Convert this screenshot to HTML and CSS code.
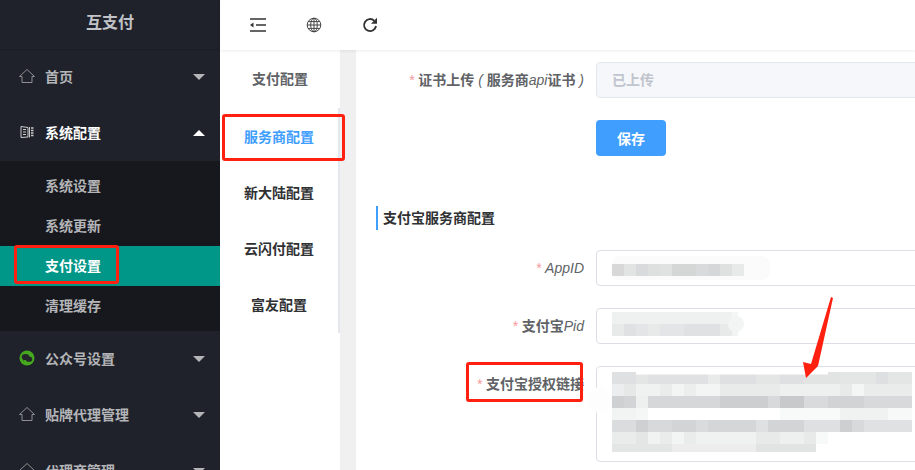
FILE: index.html
```html
<!DOCTYPE html>
<html lang="zh-CN">
<head>
    <meta charset="UTF-8">
    <meta name="viewport" content="width=device-width, initial-scale=1.0">
    <title>互支付</title>
    <link rel="stylesheet" href="styles.css">
</head>
<body>
    <aside class="sidebar">
        <div class="logo">互支付</div>
        <ul class="menu">
            <li class="menu-item">
                <svg class="menu-icon" viewBox="0 0 16 16"><path d="M.5 8.500 8 1.500l7.500 7H13v6H3v-6z" fill="none" stroke="currentColor"/></svg>
                <span>首页</span><b class="caret"></b>
            </li>
            <li class="menu-item open">
                <svg class="menu-icon" viewBox="0 0 16 16"><path d="M2 2.500l7 1v9.500l-7 .5zM4 5.500h3M4 8h3M4 10.500h3M10.500 3v10.500" fill="none" stroke="currentColor"/><path d="M12 4h2.500M12 6.500h2.500M12 9h2.500M12 11.500h2.500" fill="none" stroke="currentColor" stroke-width="1.300"/></svg>
                <span>系统配置</span><b class="caret up"></b>
            </li>
            <li>
                <ul class="submenu">
                    <li>系统设置</li>
                    <li>系统更新</li>
                    <li class="active"><i class="mark mark-pay"></i>支付设置</li>
                    <li>清理缓存</li>
                </ul>
            </li>
            <li class="menu-item">
                <svg class="menu-icon" viewBox="0 0 16 16"><circle cx="8" cy="8" r="7.500" fill="#46a81e"/><ellipse cx="6.500" cy="7" rx="3.800" ry="3.100" fill="#23262a"/><ellipse cx="10" cy="9.200" rx="3.200" ry="2.600" fill="#23262a"/><path d="M4 10.800l.3-2 1.500 1z" fill="#23262a"/></svg>
                <span>公众号设置</span><b class="caret"></b>
            </li>
            <li class="menu-item">
                <svg class="menu-icon" viewBox="0 0 16 16"><path d="M.5 8.500 8 1.500l7.500 7H13v6H3v-6z" fill="none" stroke="currentColor"/></svg>
                <span>贴牌代理管理</span><b class="caret"></b>
            </li>
            <li class="menu-item">
                <svg class="menu-icon" viewBox="0 0 16 16"><path d="M.5 8.500 8 1.500l7.500 7H13v6H3v-6z" fill="none" stroke="currentColor"/></svg>
                <span>代理商管理</span><b class="caret"></b>
            </li>
        </ul>
    </aside>

    <div class="main">
        <header class="topbar">
            <svg class="tool" viewBox="0 0 16 16"><path d="M0 2h16M6 8h10M0 14h16" fill="none" stroke="#333" stroke-width="1.500"/><path d="M0 8l3.500-2.500v5z" fill="#333"/></svg>
            <svg class="tool" viewBox="0 0 16 16"><g fill="none" stroke="#444" stroke-width="1"><circle cx="8" cy="8" r="6.800"/><ellipse cx="8" cy="8" rx="3.300" ry="6.800"/><path d="M8 1.200v13.600M1.200 8h13.600M2.200 4.600h11.600M2.200 11.400h11.600"/></g></svg>
            <svg class="tool" viewBox="0 0 16 16"><path d="M14 9A6 6 0 1 1 12.200 3.700" fill="none" stroke="#333" stroke-width="1.900"/><path d="M15 .8v6H9z" fill="#333"/></svg>
        </header>

        <div class="body">
            <nav class="tabs">
                <div class="tab tab-first">支付配置</div>
                <div class="tab-list">
                    <div class="tab current"><i class="mark mark-tab"></i>服务商配置</div>
                    <div class="tab">新大陆配置</div>
                    <div class="tab">云闪付配置</div>
                    <div class="tab">富友配置</div>
                </div>
            </nav>

            <main class="content">
                <div class="row">
                    <label class="label"><em>*</em>证书上传 <i>(</i> 服务商<i>api</i>证书 <i>)</i></label>
                    <div class="field disabled">已上传</div>
                </div>
                <div class="row row-button">
                    <button class="save">保存</button>
                </div>

                <h3 class="section">支付宝服务商配置</h3>

                <div class="row">
                    <label class="label"><em>*</em><i>AppID</i></label>
                    <div class="field">
                        <svg class="blur" viewBox="596 250 200 36" width="200" height="36">
                            <rect x="612" y="256" width="158" height="24" rx="8" fill="#fbfbfb"/>
                            <g stroke-width="12">
                                <path stroke="#d8d8d9" d="M612 270h12"/><path stroke="#e2e3e3" d="M624 270h12"/><path stroke="#d9dadb" d="M636 270h12"/><path stroke="#dedfdf" d="M648 270h12"/><path stroke="#e0e1e1" d="M660 270h12"/><path stroke="#d5d6d6" d="M672 270h24"/><path stroke="#d9dadb" d="M696 270h12"/><path stroke="#d6d7d8" d="M708 270h12"/><path stroke="#dfe0e0" d="M720 270h12"/><path stroke="#e8e9e9" d="M732 270h12"/>
                            </g>
                        </svg>
                    </div>
                </div>
                <div class="row">
                    <label class="label"><em>*</em>支付宝<i>Pid</i></label>
                    <div class="field">
                        <svg class="blur" viewBox="596 308 200 36" width="200" height="36">
                            <g stroke-width="12">
                                <path stroke="#eff0f0" d="M612 318h120"/><path stroke="#f4f5f5" d="M732 318h6"/>
                                <path stroke="#e8e9e9" d="M612 330h12"/><path stroke="#e0e1e3" d="M624 330h12"/><path stroke="#e4e5e6" d="M636 330h12"/><path stroke="#e8e9e9" d="M648 330h12"/><path stroke="#e4e5e6" d="M660 330h24"/><path stroke="#e0e1e3" d="M684 330h36"/><path stroke="#e8e9e9" d="M720 330h12"/><path stroke="#f2f3f3" d="M732 330h6"/>
                            </g>
                            <circle cx="736" cy="324" r="8" fill="#f3f4f4"/>
                        </svg>
                    </div>
                </div>
                <div class="row">
                    <label class="label"><i class="mark mark-label"></i><em>*</em>支付宝授权链接</label>
                    <div class="field textarea">
                        <svg class="blur blur-area" viewBox="586 366 330 96" width="330" height="96">
                            <rect x="588" y="387" width="24" height="26" rx="12" fill="#fdfdfd"/>
                            <g stroke-width="12">
                                <path stroke="#dfe0e1" d="M612 378h24"/><path stroke="#e4e5e5" d="M636 378h12"/><path stroke="#e0e1e2" d="M648 378h60"/><path stroke="#e9eaea" d="M708 378h12"/><path stroke="#dfe0e1" d="M720 378h36"/><path stroke="#e4e5e5" d="M756 378h24"/><path stroke="#dfe0e1" d="M780 378h24"/><path stroke="#e2e3e3" d="M804 378h36"/><path stroke="#e4e5e5" d="M840 378h36"/><path stroke="#dedfe0" d="M876 378h12"/><path stroke="#e4e5e5" d="M888 378h24"/>
                                <path stroke="#ecedee" d="M612 390h12"/><path stroke="#e6e7e7" d="M624 390h12"/><path stroke="#f0f1f1" d="M636 390h24"/><path stroke="#eaebeb" d="M660 390h12"/><path stroke="#f3f4f4" d="M672 390h12"/><path stroke="#eceded" d="M684 390h12"/><path stroke="#f3f4f4" d="M696 390h24"/><path stroke="#e9eaea" d="M720 390h60"/><path stroke="#eeefef" d="M780 390h60"/><path stroke="#e8e9e9" d="M840 390h12"/><path stroke="#f4f5f5" d="M852 390h12"/><path stroke="#eaebeb" d="M864 390h48"/>
                                <path stroke="#cfd0d1" d="M612 402h12"/><path stroke="#d3d4d5" d="M624 402h12"/><path stroke="#eeefef" d="M636 402h12"/><path stroke="#d6d7d8" d="M648 402h72"/><path stroke="#cdced0" d="M720 402h48"/><path stroke="#d8d9da" d="M768 402h12"/><path stroke="#c8c9cb" d="M780 402h24"/><path stroke="#d9dadb" d="M804 402h24"/><path stroke="#d2d3d4" d="M828 402h36"/><path stroke="#d8d9da" d="M864 402h48"/>
                                <path stroke="#f2f3f3" d="M612 414h24"/><path stroke="#f5f6f6" d="M636 414h12"/><path stroke="#ffffff" d="M648 414h132"/><path stroke="#f8f9f9" d="M780 414h60"/><path stroke="#f0f1f1" d="M840 414h48"/><path stroke="#f7f8f8" d="M888 414h24"/>
                                <path stroke="#dbdcdd" d="M612 426h24"/><path stroke="#cfd0d2" d="M636 426h12"/><path stroke="#d8d9da" d="M648 426h24"/><path stroke="#d3d4d5" d="M672 426h24"/><path stroke="#dadbdc" d="M696 426h12"/><path stroke="#d5d6d7" d="M708 426h48"/><path stroke="#dfe0e1" d="M756 426h12"/><path stroke="#d3d4d5" d="M768 426h36"/><path stroke="#dfe0e1" d="M804 426h36"/><path stroke="#cdcfd1" d="M840 426h12"/><path stroke="#d8d9da" d="M852 426h12"/><path stroke="#e0e1e2" d="M864 426h48"/>
                                <path stroke="#eaebeb" d="M612 438h24"/><path stroke="#e4e5e5" d="M636 438h12"/><path stroke="#f1f2f2" d="M648 438h12"/><path stroke="#eaebeb" d="M660 438h12"/><path stroke="#f3f4f4" d="M672 438h12"/><path stroke="#eaebeb" d="M684 438h12"/><path stroke="#f0f1f1" d="M696 438h60"/><path stroke="#e8e9e9" d="M756 438h24"/><path stroke="#eeefef" d="M780 438h24"/><path stroke="#e8e9e9" d="M804 438h12"/><path stroke="#f8f9f9" d="M816 438h12"/>
                            </g>
                            <g stroke-width="8">
                                <path stroke="#e4e5e5" d="M612 448h60"/><path stroke="#ededed" d="M672 448h84"/><path stroke="#e2e3e3" d="M756 448h60"/>
                            </g>
                            <path d="M636 373h192" stroke="#fff" stroke-width="3"/>
                        </svg>
                    </div>
                </div>
            </main>
        </div>
    </div>

    <svg class="arrow" viewBox="0 0 915 470" width="915" height="470"><path d="M831 297 833 298 818 366 806 378 803 362 811 364z" fill="#ff2010"/></svg>
</body>
</html>
```

FILE: styles.css
```css
* {
    box-sizing: border-box;
    margin: 0;
    padding: 0;
}

html, body {
    height: 100%;
    overflow: hidden;
}

body {
    display: flex;
    position: relative;
    font-family: "Liberation Sans", "Noto Sans CJK SC", sans-serif;
    font-size: 14px;
    color: #606266;
    background-color: #fff;
}

ul {
    list-style: none;
}

/* 左侧菜单 */
.sidebar {
    width: 220px;
    flex-shrink: 0;
    background-color: #1f222a;
    color: #b4b5b8;
    font-weight: 700;
}

.logo {
    height: 49px;
    line-height: 46px;
    text-align: center;
    font-size: 16px;
    color: #c2c3c6;
    box-shadow: 0 1px 1px rgba(0, 0, 0, 0.1);
}

.menu-item {
    display: flex;
    align-items: center;
    height: 56px;
    padding: 0 15px 2px 19px;
}

.menu-icon {
    width: 16px;
    height: 16px;
    margin-right: 10px;
    color: #8e8f92;
}

.menu-item.open {
    color: #fff;
}

.menu-item.open .menu-icon {
    color: #c9cacc;
}

.caret {
    margin-left: auto;
    margin-top: 1px;
    border-left: 6px solid transparent;
    border-right: 6px solid transparent;
    border-top: 6px solid #b4b5b8;
}

.caret.up {
    border-top: 0;
    border-bottom: 6px solid #fff;
}

.submenu {
    background-color: #17181d;
    padding: 5px 0;
}

.submenu li {
    position: relative;
    height: 40px;
    line-height: 40px;
    padding-left: 45px;
}

.submenu li.active {
    background-color: #009688;
    color: #fff;
}

/* 红色标注框 */
.mark {
    position: absolute;
    border: 3px solid #ff2010;
    border-radius: 3px;
}

.mark-pay {
    left: 14px;
    top: -1px;
    width: 105px;
    height: 39px;
}

.mark-tab {
    left: 2px;
    top: 5px;
    width: 123px;
    height: 47px;
}

.mark-label {
    left: 110px;
    top: -4px;
    width: 117px;
    height: 40px;
}

.arrow {
    position: absolute;
    left: 0;
    top: 0;
}

/* 顶部工具栏 */
.main {
    flex: 1;
    min-width: 0;
    display: flex;
    flex-direction: column;
}

.topbar {
    height: 50px;
    flex-shrink: 0;
    display: flex;
    align-items: center;
    gap: 40px;
    padding-left: 30px;
    box-shadow: 0 1px 3px rgba(0, 0, 0, 0.08);
    position: relative;
}

.tool {
    width: 16px;
    height: 16px;
}

.body {
    flex: 1;
    display: flex;
    min-height: 0;
}

/* 中间标签 */
.tabs {
    width: 136px;
    flex-shrink: 0;
    background: linear-gradient(to right, #fff 120px, #f0f0f0 120px);
}

.tab {
    position: relative;
    width: 120px;
    height: 56px;
    line-height: 56px;
    text-align: center;
    font-weight: 700;
    color: #303133;
}

.tab-first {
    height: 58px;
    line-height: 58px;
    color: #606266;
}

.tab-list {
    width: 120px;
    padding-top: 1px;
    background-color: #fff;
    border-right: 2px solid #e4e7ed;
}

.tab-list .tab {
    width: 118px;
}

.tab.current {
    color: #409eff;
}

/* 表单 */
.content {
    flex: 1;
    min-width: 0;
    padding-top: 12px;
    background-color: #fff;
}

.row {
    position: relative;
    display: flex;
    margin-bottom: 22px;
}

.row-button {
    margin-bottom: 50px;
    padding-left: 240px;
}

.label {
    position: relative;
    width: 228px;
    flex-shrink: 0;
    margin-right: 12px;
    line-height: 36px;
    text-align: right;
    font-weight: 700;
    white-space: nowrap;
}

.label i {
    font-weight: 400;
}

.label em {
    color: #f89898;
    font-weight: 400;
    margin-right: 4px;
}

.field {
    position: relative;
    flex-shrink: 0;
    width: 420px;
    height: 36px;
    line-height: 34px;
    padding: 0 15px;
    border: 1px solid #dcdfe6;
    border-radius: 4px;
}

.field.disabled {
    background-color: #f5f7fa;
    border-color: #e4e7ed;
    color: #c0c4cc;
    font-weight: 700;
}

.field.textarea {
    height: 96px;
}

.blur {
    position: absolute;
    left: -1px;
    top: -1px;
}

.blur-area {
    left: -11px;
}

.save {
    width: 70px;
    height: 36px;
    border: 0;
    border-radius: 4px;
    background-color: #409eff;
    color: #fff;
    font: inherit;
    font-weight: 700;
}

.section {
    margin: 0 0 20px 20px;
    padding-left: 5px;
    height: 24px;
    line-height: 24px;
    border-left: 2px solid #409eff;
    font-size: 14px;
    color: #303133;
}
```
